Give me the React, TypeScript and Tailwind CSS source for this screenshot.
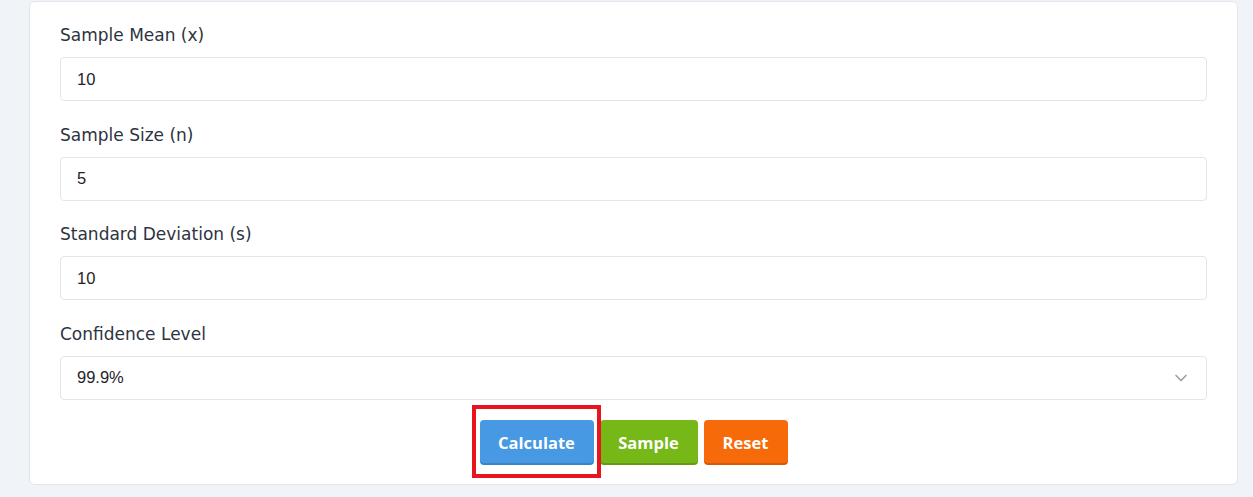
import { ChevronDown } from "lucide-react";

const fields = [
  { label: "Sample Mean (x)", value: "10" },
  { label: "Sample Size (n)", value: "5" },
  { label: "Standard Deviation (s)", value: "10" },
];

const App = () => {
  return (
    <div className="min-h-[497px] w-full bg-[#f0f3f8] pl-[29px] pr-[15px] pt-px pb-3">
      {/* CARD */}
      <div className="rounded-md border border-[#e3e7ed] bg-white px-[30px] pt-[21px] pb-[21px]">
        {fields.map((f) => (
          <div key={f.label} className="mb-[21.5px]">
            <label className="mb-2.5 block font-['DejaVu_Sans',sans-serif] text-[17px] leading-6 text-[#2d3340]">
              {f.label}
            </label>
            <input
              defaultValue={f.value}
              className="block h-11 w-full rounded border border-[#e2e5ea] px-4 font-['Liberation_Sans',sans-serif] text-[16.5px] text-[#1f2329] outline-none"
            />
          </div>
        ))}
        {/* CONFIDENCE LEVEL */}
        <div>
          <label className="mb-2.5 block font-['DejaVu_Sans',sans-serif] text-[17px] leading-6 text-[#2d3340]">
            Confidence Level
          </label>
          <div className="flex h-11 w-full items-center justify-between rounded border border-[#e2e5ea] pl-4 pr-[15px]">
            <span className="font-['Liberation_Sans',sans-serif] text-[16.5px] text-[#1f2329]">
              99.9%
            </span>
            <ChevronDown className="h-5 w-5 text-[#9aa0aa]" strokeWidth={2} />
          </div>
        </div>
        {/* BUTTONS */}
        <div className="mt-5 flex items-start justify-center gap-1.5">
          <div className="relative">
            <button className="h-[43px] w-[114px] rounded bg-[#4699e2] pt-1 font-['Open_Sans',sans-serif] text-[16.5px] font-bold text-white shadow-[0_2px_0_#3a83c4]">
              Calculate
            </button>
            <div className="pointer-events-none absolute -left-2 -right-[7px] -top-[15px] -bottom-[15px] border-4 border-[#e8141f]" />
          </div>
          <button className="h-[43px] w-[98px] rounded bg-[#76b817] pt-1 font-['Open_Sans',sans-serif] text-[16.5px] font-bold text-white shadow-[0_2px_0_#639c12]">
            Sample
          </button>
          <button className="h-[43px] w-[84px] rounded bg-[#f76a09] pt-1 font-['Open_Sans',sans-serif] text-[16.5px] font-bold text-white shadow-[0_2px_0_#d65a06]">
            Reset
          </button>
        </div>
      </div>
    </div>
  );
};

export default App;
